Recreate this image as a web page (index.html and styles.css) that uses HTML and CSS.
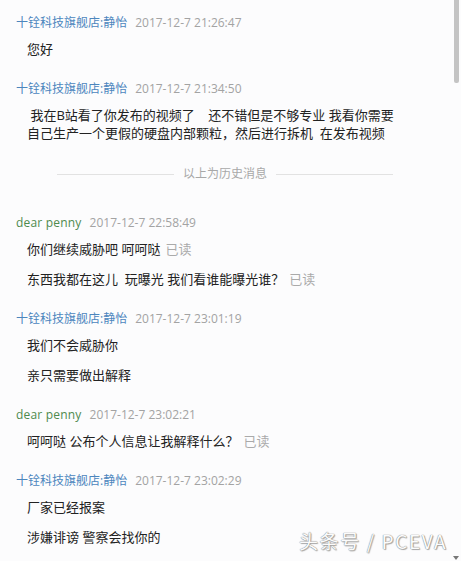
FILE: index.html
```html
<!DOCTYPE html>
<html lang="zh-CN">
<head>
<meta charset="utf-8">
<title>聊天记录</title>
<link rel="stylesheet" href="styles.css">
</head>
<body>
<div class="chat">
  <div class="group">
    <div class="head"><span class="name shop">十铨科技旗舰店:静怡</span><span class="time">2017-12-7 21:26:47</span></div>
    <div class="msgs">
      <div class="msg">您好</div>
    </div>
  </div>
  <div class="group">
    <div class="head"><span class="name shop">十铨科技旗舰店:静怡</span><span class="time">2017-12-7 21:34:50</span></div>
    <div class="msgs">
      <div class="msg pre"> 我在B站看了你发布的视频了    还不错但是不够专业 我看你需要<br>自己生产一个更假的硬盘内部颗粒，然后进行拆机  在发布视频</div>
    </div>
  </div>
  <div class="divider"><span class="line"></span><span class="divider-text">以上为历史消息</span><span class="line"></span></div>
  <div class="group">
    <div class="head"><span class="name user">dear penny</span><span class="time">2017-12-7 22:58:49</span></div>
    <div class="msgs">
      <div class="msg">你们继续威胁吧 呵呵哒<span class="read">已读</span></div>
      <div class="msg pre">东西我都在这儿  玩曝光 我们看谁能曝光谁？<span class="read">已读</span></div>
    </div>
  </div>
  <div class="group">
    <div class="head"><span class="name shop">十铨科技旗舰店:静怡</span><span class="time">2017-12-7 23:01:19</span></div>
    <div class="msgs">
      <div class="msg">我们不会威胁你</div>
      <div class="msg">亲只需要做出解释</div>
    </div>
  </div>
  <div class="group">
    <div class="head"><span class="name user">dear penny</span><span class="time">2017-12-7 23:02:21</span></div>
    <div class="msgs">
      <div class="msg">呵呵哒 公布个人信息让我解释什么？<span class="read">已读</span></div>
    </div>
  </div>
  <div class="group">
    <div class="head"><span class="name shop">十铨科技旗舰店:静怡</span><span class="time">2017-12-7 23:02:29</span></div>
    <div class="msgs">
      <div class="msg">厂家已经报案</div>
      <div class="msg">涉嫌诽谤 警察会找你的</div>
    </div>
  </div>
</div>
<div class="scroll-thumb"></div>
<div class="scroll-arrow"></div>
<div class="watermark">头条号 / PCEVA</div>
</body>
</html>
```
FILE: styles.css
```css
html, body {
  margin: 0;
  padding: 0;
  background: #fcfcfd;
}
body {
  width: 461px;
  height: 561px;
  overflow: hidden;
  position: relative;
  font-family: "Open Sans", "Noto Sans CJK SC", sans-serif;
  color: #222;
}
.chat {
  display: flex;
  flex-direction: column;
  padding: 14px 0 0 16px;
}
.group {
  display: flex;
  flex-direction: column;
  margin-bottom: 22px;
}
.head {
  display: flex;
  align-items: center;
  gap: 8px;
  height: 18px;
  line-height: 18px;
  font-size: 12px;
  white-space: nowrap;
}
.name.shop { color: #4d86bd; }
.name.user { color: #4e8a4e; font-size: 12px; letter-spacing: 0.2px; }
.time { color: #a3a3a3; }
.msgs {
  display: flex;
  flex-direction: column;
  gap: 12px;
  margin-top: 8px;
  padding-left: 11px;
}
.msg {
  font-size: 13px;
  line-height: 18px;
  white-space: nowrap;
  color: #222;
}
.msg.pre { white-space: pre; }
.read {
  color: #aaa;
  margin-left: 5px;
}
.divider {
  display: flex;
  align-items: center;
  gap: 9px;
  width: 336px;
  margin: 1px 0 31px 41px;
  height: 18px;
}
.line {
  flex: 1;
  height: 1px;
  background: #e2e2e2;
}
.divider-text {
  font-size: 12px;
  color: #a8a8a8;
  line-height: 18px;
}
.scroll-thumb {
  position: absolute;
  right: 2px;
  top: 0;
  width: 5px;
  height: 83px;
  background: #c4c4c4;
  border-radius: 0 0 2px 2px;
}
.scroll-arrow {
  position: absolute;
  right: 2px;
  bottom: 1px;
  width: 0;
  height: 0;
  border-left: 3px solid transparent;
  border-right: 3px solid transparent;
  border-top: 4px solid #777;
}
.watermark {
  position: absolute;
  left: 299px;
  top: 528px;
  white-space: nowrap;
  font-family: "Noto Sans CJK SC", sans-serif;
  font-size: 19px;
  line-height: 26px;
  color: #fbfbfb;
  letter-spacing: 1.6px;
  text-shadow: 0 0 1px #8a8a8a, 0 0 1px #8a8a8a, 1px 1px 1px #aaa;
}
```
